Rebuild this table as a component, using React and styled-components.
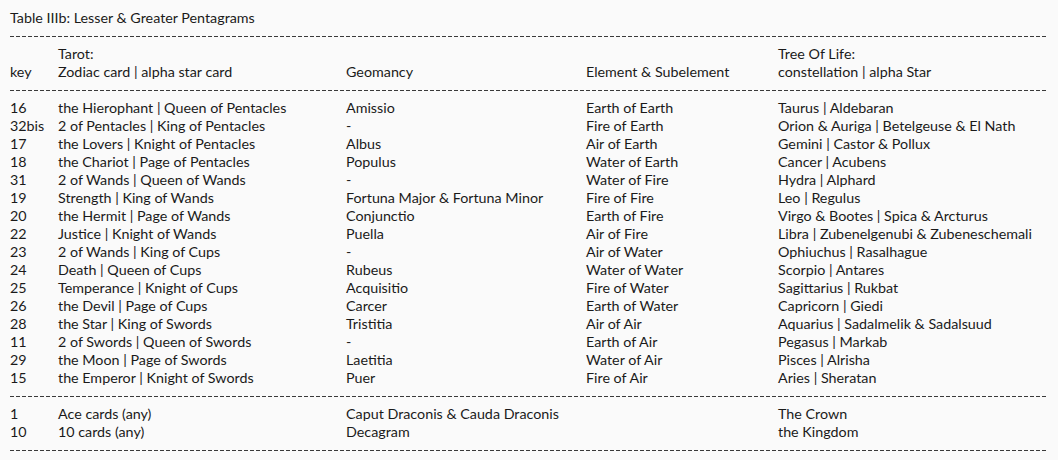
import React from 'react'
import styled, { createGlobalStyle } from 'styled-components'

const GlobalStyle = createGlobalStyle`
  body {
    margin: 0;
    background: #fafafa;
    font-family: Lato, "Open Sans", sans-serif;
    color: #1a1a1a;
  }
`

const Page = styled.div`
  padding: 9px 10px 0 10px;
  font-size: 14.3px;
  line-height: 18px;
`

const Title = styled.div`
  height: 18px;
`

const Rule = styled.div`
  height: 18px;
  display: flex;
  align-items: center;
  &::after {
    content: '';
    flex: 1;
    height: 1px;
    background-image: repeating-linear-gradient(
      to right,
      #3a3a3a 0 4px,
      transparent 4px 6px
    );
  }
`

const Row = styled.div`
  display: grid;
  grid-template-columns: 48px 288px 240px 192px 1fr;
  height: 18px;
  white-space: nowrap;
`

const Cell = styled.span``

const rows = [
  ['16', 'the Hierophant | Queen of Pentacles', 'Amissio', 'Earth of Earth', 'Taurus | Aldebaran'],
  ['32bis', '2 of Pentacles | King of Pentacles', '-', 'Fire of Earth', 'Orion & Auriga | Betelgeuse & El Nath'],
  ['17', 'the Lovers | Knight of Pentacles', 'Albus', 'Air of Earth', 'Gemini | Castor & Pollux'],
  ['18', 'the Chariot | Page of Pentacles', 'Populus', 'Water of Earth', 'Cancer | Acubens'],
  ['31', '2 of Wands | Queen of Wands', '-', 'Water of Fire', 'Hydra | Alphard'],
  ['19', 'Strength | King of Wands', 'Fortuna Major & Fortuna Minor', 'Fire of Fire', 'Leo | Regulus'],
  ['20', 'the Hermit | Page of Wands', 'Conjunctio', 'Earth of Fire', 'Virgo & Bootes | Spica & Arcturus'],
  ['22', 'Justice | Knight of Wands', 'Puella', 'Air of Fire', 'Libra | Zubenelgenubi & Zubeneschemali'],
  ['23', '2 of Wands | King of Cups', '-', 'Air of Water', 'Ophiuchus | Rasalhague'],
  ['24', 'Death | Queen of Cups', 'Rubeus', 'Water of Water', 'Scorpio | Antares'],
  ['25', 'Temperance | Knight of Cups', 'Acquisitio', 'Fire of Water', 'Sagittarius | Rukbat'],
  ['26', 'the Devil | Page of Cups', 'Carcer', 'Earth of Water', 'Capricorn | Giedi'],
  ['28', 'the Star | King of Swords', 'Tristitia', 'Air of Air', 'Aquarius | Sadalmelik & Sadalsuud'],
  ['11', '2 of Swords | Queen of Swords', '-', 'Earth of Air', 'Pegasus | Markab'],
  ['29', 'the Moon | Page of Swords', 'Laetitia', 'Water of Air', 'Pisces | Alrisha'],
  ['15', 'the Emperor | Knight of Swords', 'Puer', 'Fire of Air', 'Aries | Sheratan'],
]

const extras = [
  ['1', 'Ace cards (any)', 'Caput Draconis & Cauda Draconis', '', 'The Crown'],
  ['10', '10 cards (any)', 'Decagram', '', 'the Kingdom'],
]

const renderRow = (r, i) => (
  <Row key={i}>
    {r.map((c, j) => (
      <Cell key={j}>{c}</Cell>
    ))}
  </Row>
)

export default function App() {
  return (
    <Page>
      <GlobalStyle />
      <Title>Table IIIb: Lesser &amp; Greater Pentagrams</Title>
      <Rule />
      {renderRow(['', 'Tarot:', '', '', 'Tree Of Life:'], 'h1')}
      {renderRow(
        ['key', 'Zodiac card | alpha star card', 'Geomancy', 'Element & Subelement', 'constellation | alpha Star'],
        'h2'
      )}
      <Rule />
      {rows.map(renderRow)}
      <Rule />
      {extras.map(renderRow)}
      <Rule />
    </Page>
  )
}
